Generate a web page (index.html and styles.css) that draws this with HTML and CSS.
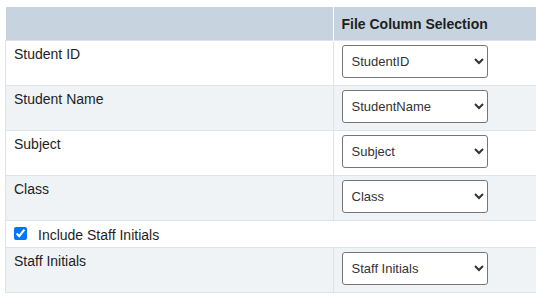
FILE: index.html
```html
<!DOCTYPE html>
<html lang="en">
<head>
    <meta charset="UTF-8">
    <title>File Column Selection</title>
    <link rel="stylesheet" href="styles.css">
</head>
<body>

    <table class="mapping-table">
        <thead>
            <tr>
                <th class="field-col"></th>
                <th>File Column Selection</th>
            </tr>
        </thead>
        <tbody>
            <tr>
                <td>Student ID</td>
                <td>
                    <select class="column-select">
                        <option>StudentID</option>
                    </select>
                </td>
            </tr>
            <tr class="alt">
                <td>Student Name</td>
                <td>
                    <select class="column-select">
                        <option>StudentName</option>
                    </select>
                </td>
            </tr>
            <tr>
                <td>Subject</td>
                <td>
                    <select class="column-select">
                        <option>Subject</option>
                    </select>
                </td>
            </tr>
            <tr class="alt">
                <td>Class</td>
                <td>
                    <select class="column-select">
                        <option>Class</option>
                    </select>
                </td>
            </tr>
            <tr class="check-row">
                <td colspan="2">
                    <label class="check-label">
                        <input type="checkbox" checked>Include Staff Initials
                    </label>
                </td>
            </tr>
            <tr class="alt">
                <td>Staff Initials</td>
                <td>
                    <select class="column-select">
                        <option>Staff Initials</option>
                    </select>
                </td>
            </tr>
        </tbody>
    </table>

</body>
</html>
```

FILE: styles.css
```css
body {
    font-family: 'Liberation Sans', Arial, sans-serif;
    font-size: 14px;
    color: #1e1e1e;
    margin: 0;
    padding: 7px 0 0 5px;
    overflow: hidden;
    background-color: #fff;
}


.mapping-table {
    width: 600px;
    border-collapse: collapse;
}

.mapping-table th {
    background-color: #c7d4df;
    text-align: left;
    font-weight: bold;
    line-height: 16px;
    padding: 9px 8px 8px;
    border-right: 1px solid #fff;
}

.mapping-table th.field-col {
    width: 311px;
}

.mapping-table td {
    vertical-align: top;
    line-height: 16px;
    padding: 5px 8px 0;
    border: 1px solid #dde3e8;
    border-right: none;
}

.mapping-table td:last-child {
    padding: 4px 8px 7px;
}

.mapping-table tr.alt td {
    background-color: #eff3f6;
}


.column-select {
    display: block;
    width: 146px;
    height: 33px;
    padding: 0 5px;
    font-family: 'Liberation Sans', Arial, sans-serif;
    font-size: 13px;
    color: #333;
    background-color: #fff;
    border: 1px solid #767676;
    border-radius: 3px;
}


.mapping-table .check-row td {
    padding: 6px 8px 4px;
}

.check-label input {
    vertical-align: baseline;
    margin: 0 11px 0 0;
    width: 13px;
    height: 13px;
    accent-color: #0075ff;
}
```
